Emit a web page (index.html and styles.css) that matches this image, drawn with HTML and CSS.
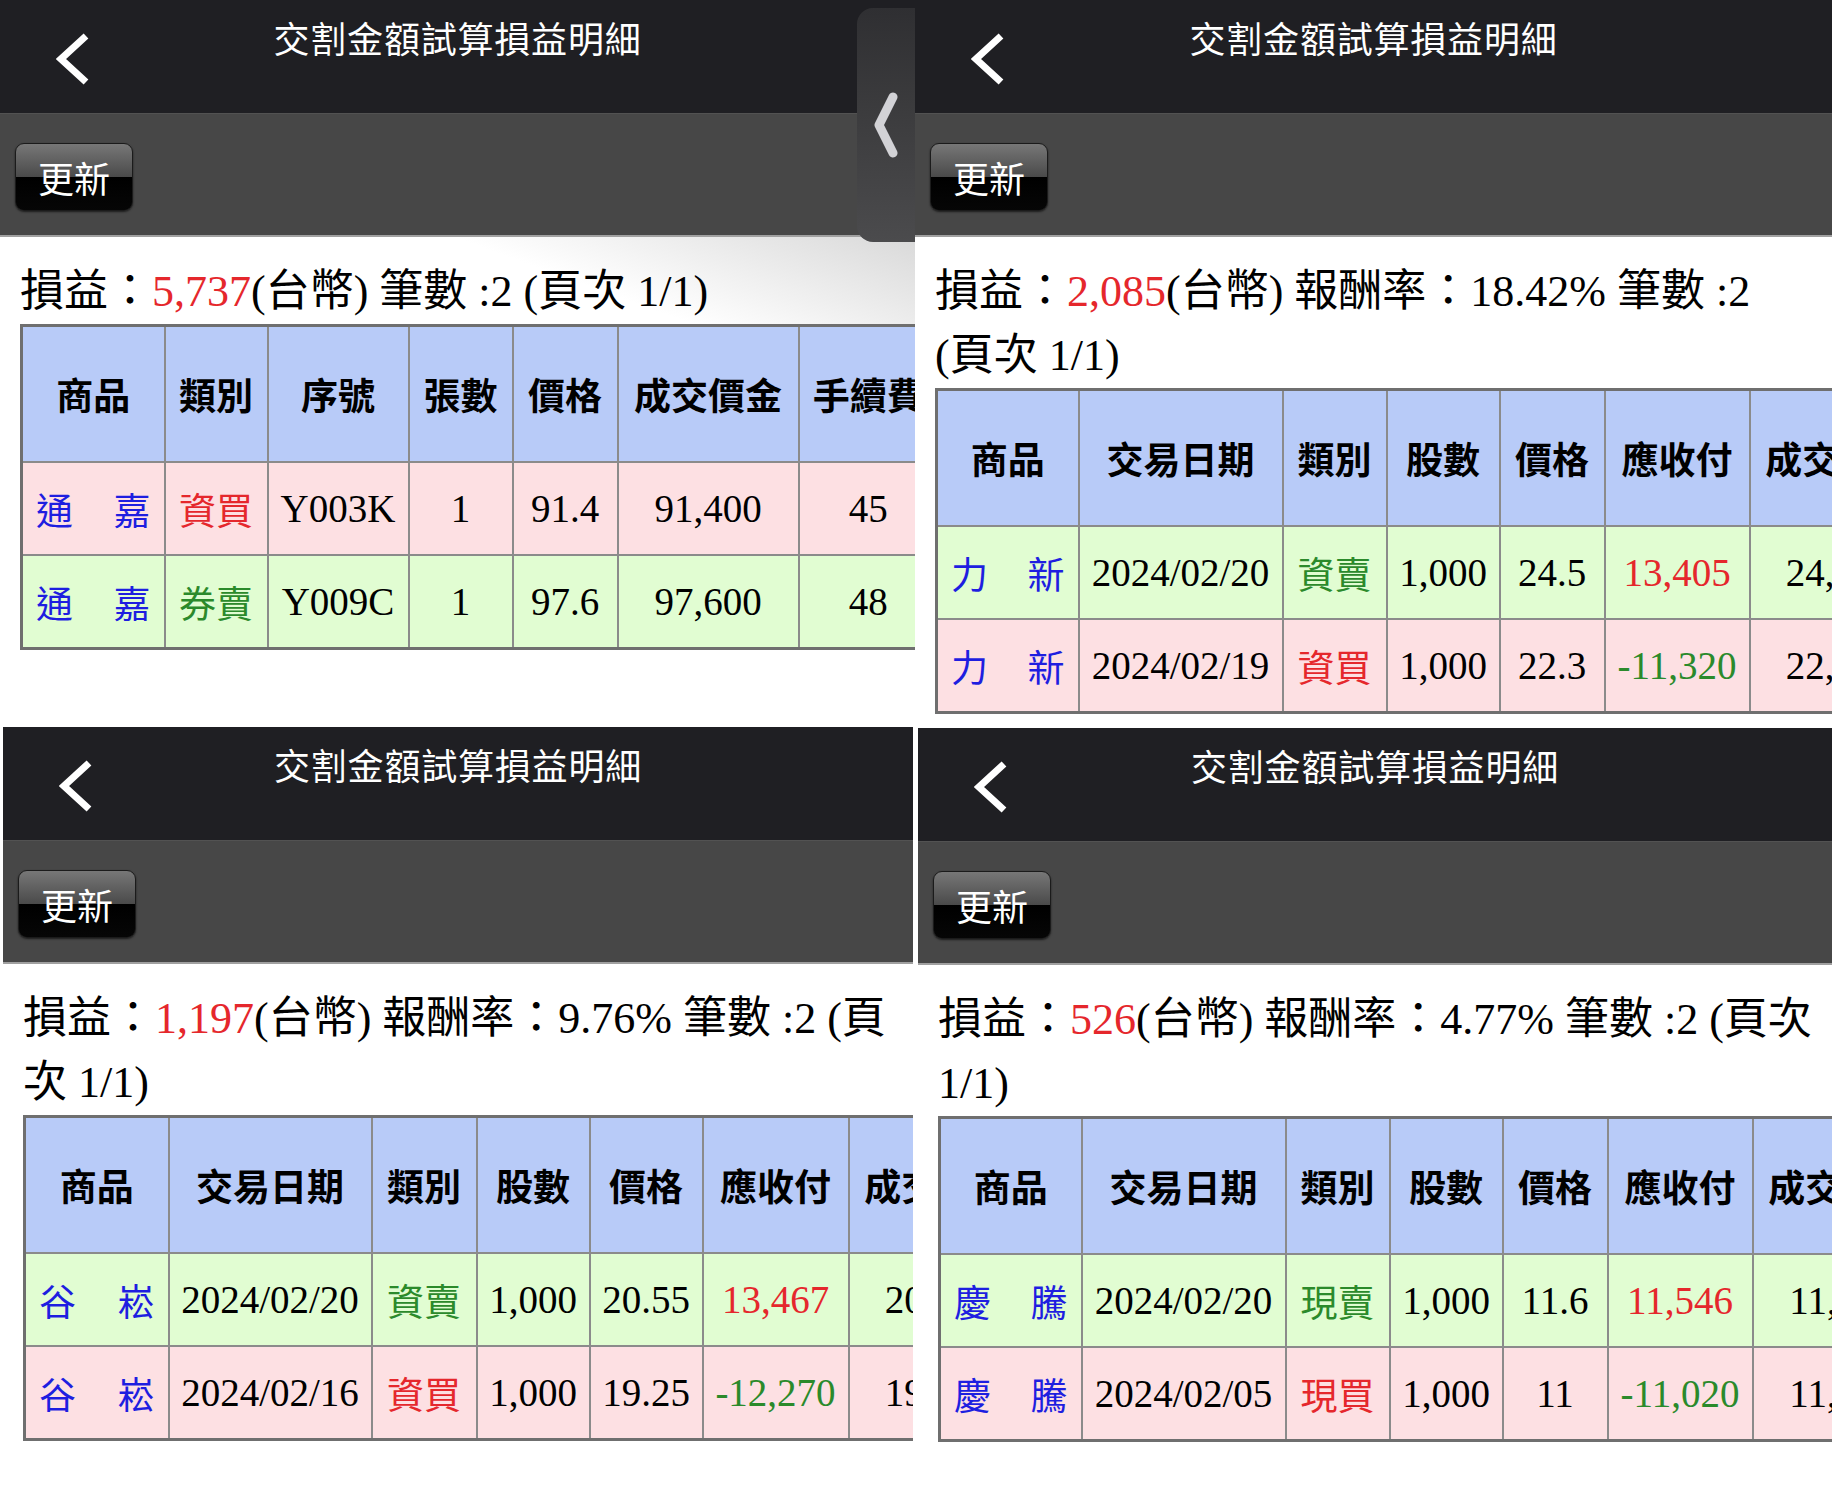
FILE: index.html
```html
<!DOCTYPE html>
<html lang="zh-Hant">
<head>
    <meta charset="utf-8">
    <title>交割金額試算損益明細</title>
    <link rel="stylesheet" href="styles.css">
</head>
<body>
<div class="board">

    <!-- 上左：成交明細 -->
    <section class="screen">
        <header class="nav">
            <a class="back" href="#"><svg width="34" height="52" viewBox="0 0 34 52"><polyline points="30,3 5,26 30,49"/></svg></a>
            <h1 class="title">交割金額試算損益明細</h1>
        </header>
        <div class="toolbar"><button class="refresh" type="button">更新</button></div>
        <p class="summary shaded">損益：<span class="red">5,737</span>(台幣) 筆數 :2 (頁次 1/1)</p>
        <table class="deal-table list">
            <colgroup>
                <col class="w143"><col class="w103"><col class="w141"><col class="w104"><col class="w105"><col class="w181"><col class="w140">
            </colgroup>
            <thead>
                <tr><th>商品</th><th>類別</th><th>序號</th><th>張數</th><th>價格</th><th>成交價金</th><th>手續費</th></tr>
            </thead>
            <tbody>
                <tr class="buy"><td class="name">通嘉</td><td class="kind red">資買</td><td>Y003K</td><td>1</td><td>91.4</td><td>91,400</td><td>45</td></tr>
                <tr class="sell"><td class="name">通嘉</td><td class="kind green">券賣</td><td>Y009C</td><td>1</td><td>97.6</td><td>97,600</td><td>48</td></tr>
            </tbody>
        </table>
        <div class="drawer-tab"><svg width="24" height="66" viewBox="0 0 24 66"><polyline points="19,5 5,33 19,61"/></svg></div>
    </section>

    <!-- 上右：力新 -->
    <section class="screen">
        <header class="nav">
            <a class="back" href="#"><svg width="34" height="52" viewBox="0 0 34 52"><polyline points="30,3 5,26 30,49"/></svg></a>
            <h1 class="title">交割金額試算損益明細</h1>
        </header>
        <div class="toolbar"><button class="refresh" type="button">更新</button></div>
        <p class="summary">損益：<span class="red">2,085</span>(台幣) 報酬率：18.42% 筆數 :2 (頁次 1/1)</p>
        <table class="deal-table detail">
            <colgroup>
                <col class="w142"><col class="w204"><col class="w104"><col class="w113"><col class="w105"><col class="w145"><col class="w180">
            </colgroup>
            <thead>
                <tr><th>商品</th><th>交易日期</th><th>類別</th><th>股數</th><th>價格</th><th>應收付</th><th>成交價金</th></tr>
            </thead>
            <tbody>
                <tr class="sell"><td class="name">力新</td><td>2024/02/20</td><td class="kind green">資賣</td><td>1,000</td><td>24.5</td><td class="red">13,405</td><td>24,500</td></tr>
                <tr class="buy"><td class="name">力新</td><td>2024/02/19</td><td class="kind red">資買</td><td>1,000</td><td>22.3</td><td class="green">-11,320</td><td>22,300</td></tr>
            </tbody>
        </table>
    </section>

    <!-- 下左：谷崧 -->
    <section class="screen screen-bl">
        <header class="nav">
            <a class="back" href="#"><svg width="34" height="52" viewBox="0 0 34 52"><polyline points="30,3 5,26 30,49"/></svg></a>
            <h1 class="title">交割金額試算損益明細</h1>
        </header>
        <div class="toolbar"><button class="refresh" type="button">更新</button></div>
        <p class="summary">損益：<span class="red">1,197</span>(台幣) 報酬率：9.76% 筆數 :2 (頁次 1/1)</p>
        <table class="deal-table detail">
            <colgroup>
                <col class="w144"><col class="w203"><col class="w105"><col class="w113"><col class="w113"><col class="w146"><col class="w180">
            </colgroup>
            <thead>
                <tr><th>商品</th><th>交易日期</th><th>類別</th><th>股數</th><th>價格</th><th>應收付</th><th>成交價金</th></tr>
            </thead>
            <tbody>
                <tr class="sell"><td class="name">谷崧</td><td>2024/02/20</td><td class="kind green">資賣</td><td>1,000</td><td>20.55</td><td class="red">13,467</td><td>20,550</td></tr>
                <tr class="buy"><td class="name">谷崧</td><td>2024/02/16</td><td class="kind red">資買</td><td>1,000</td><td>19.25</td><td class="green">-12,270</td><td>19,250</td></tr>
            </tbody>
        </table>
    </section>

    <!-- 下右：慶騰 -->
    <section class="screen screen-br">
        <header class="nav">
            <a class="back" href="#"><svg width="34" height="52" viewBox="0 0 34 52"><polyline points="30,3 5,26 30,49"/></svg></a>
            <h1 class="title">交割金額試算損益明細</h1>
        </header>
        <div class="toolbar"><button class="refresh" type="button">更新</button></div>
        <p class="summary">損益：<span class="red">526</span>(台幣) 報酬率：4.77% 筆數 :2 (頁次 1/1)</p>
        <table class="deal-table detail">
            <colgroup>
                <col class="w142"><col class="w204"><col class="w104"><col class="w113"><col class="w105"><col class="w145"><col class="w180">
            </colgroup>
            <thead>
                <tr><th>商品</th><th>交易日期</th><th>類別</th><th>股數</th><th>價格</th><th>應收付</th><th>成交價金</th></tr>
            </thead>
            <tbody>
                <tr class="sell"><td class="name">慶騰</td><td>2024/02/20</td><td class="kind green">現賣</td><td>1,000</td><td>11.6</td><td class="red">11,546</td><td>11,600</td></tr>
                <tr class="buy"><td class="name">慶騰</td><td>2024/02/05</td><td class="kind red">現買</td><td>1,000</td><td>11</td><td class="green">-11,020</td><td>11,000</td></tr>
            </tbody>
        </table>
    </section>

</div>
</body>
</html>
```

FILE: styles.css
```css
body {
    margin: 0;
    background: #fff;
    font-family: "Liberation Serif", "Noto Sans CJK TC", serif;
    color: #000;
}

.board {
    display: grid;
    grid-template-columns: 915px 917px;
    grid-template-rows: 727px 785px;
    width: 1832px;
}

.screen {
    position: relative;
    overflow: hidden;
    background: #fff;
}

.screen-bl {
    margin-left: 3px;
    margin-right: 2px;
}

.screen-br {
    margin-left: 3px;
    margin-top: 1px;
}

/* top bar */
.nav {
    height: 113px;
    background: #1f1f23;
    display: grid;
    grid-template-columns: 1fr auto 1fr;
    align-items: start;
}

.back {
    display: block;
    padding: 33px 0 0 56px;
}

.back polyline {
    fill: none;
    stroke: #fff;
    stroke-width: 7;
}

.title {
    margin: 0;
    padding-top: 11px;
    font: 400 36px/52px "Noto Sans CJK TC", sans-serif;
    letter-spacing: 0.8px;
    color: #fff;
}

.toolbar {
    height: 124px;
    box-sizing: border-box;
    padding: 29px 15px;
    background: #474747;
    border-top: 1px solid #525252;
    border-bottom: 2px solid #a0a0a0;
}

.refresh {
    width: 118px;
    height: 68px;
    padding: 0;
    border: 1px solid #1b1b1b;
    border-radius: 9px;
    background: linear-gradient(#777, #4a4a4a 50%, #000 50%, #060606);
    box-shadow: 0 1px 2px rgba(0, 0, 0, 0.6);
    color: #fff;
    font: 400 36px/1 "Noto Sans CJK TC", sans-serif;
    cursor: pointer;
}

/* drawer handle on the first screen */
.drawer-tab {
    position: absolute;
    top: 8px;
    right: 0;
    width: 58px;
    height: 234px;
    border-radius: 16px 0 0 16px;
    background: linear-gradient(#2f2f32, #3c3c3e 45%, #4b4b4d);
    display: flex;
    align-items: center;
    justify-content: center;
}

.drawer-tab polyline {
    fill: none;
    stroke: #d2d2d6;
    stroke-width: 9;
    stroke-linecap: round;
    stroke-linejoin: round;
}

/* summary line */
.summary {
    margin: 0;
    padding: 23px 16px 0 20px;
    font-size: 44px;
    line-height: 64px;
}

.summary.shaded {
    background: linear-gradient(200deg, #d9d9d9, rgba(255, 255, 255, 0) 40%);
}

.red {
    color: #e5272c;
}

.green {
    color: #2b8a2b;
}

/* table */
.deal-table {
    margin-left: 20px;
    border-collapse: collapse;
    table-layout: fixed;
    border: 3px solid #6f6f6f;
}

.deal-table.list {
    width: 917px;
}

.deal-table.detail {
    width: 993px;
}

.deal-table th,
.deal-table td {
    border: 2px solid #8b8b8b;
    white-space: nowrap;
    text-align: center;
}

.deal-table th {
    height: 134px;
    padding: 0;
    background: #b8cbf8;
    font: 700 37px/1.2 "Noto Sans CJK TC", sans-serif;
}

.deal-table td {
    height: 91px;
    padding: 0 6px;
    font-size: 39px;
}

.deal-table td.name {
    padding: 0 13px;
    text-align: justify;
    text-align-last: justify;
    font: 400 37px "Noto Sans CJK TC", sans-serif;
    color: #1e1ee0;
}

.deal-table td.kind {
    font: 400 37px "Noto Sans CJK TC", sans-serif;
}

.deal-table tr.buy td {
    background: #fde0e3;
}

.deal-table tr.sell td {
    background: #e1fdd2;
}

.w103 { width: 103px; }
.w104 { width: 104px; }
.w105 { width: 105px; }
.w113 { width: 113px; }
.w140 { width: 140px; }
.w141 { width: 141px; }
.w142 { width: 142px; }
.w143 { width: 143px; }
.w144 { width: 144px; }
.w145 { width: 145px; }
.w146 { width: 146px; }
.w180 { width: 180px; }
.w181 { width: 181px; }
.w203 { width: 203px; }
.w204 { width: 204px; }
```
